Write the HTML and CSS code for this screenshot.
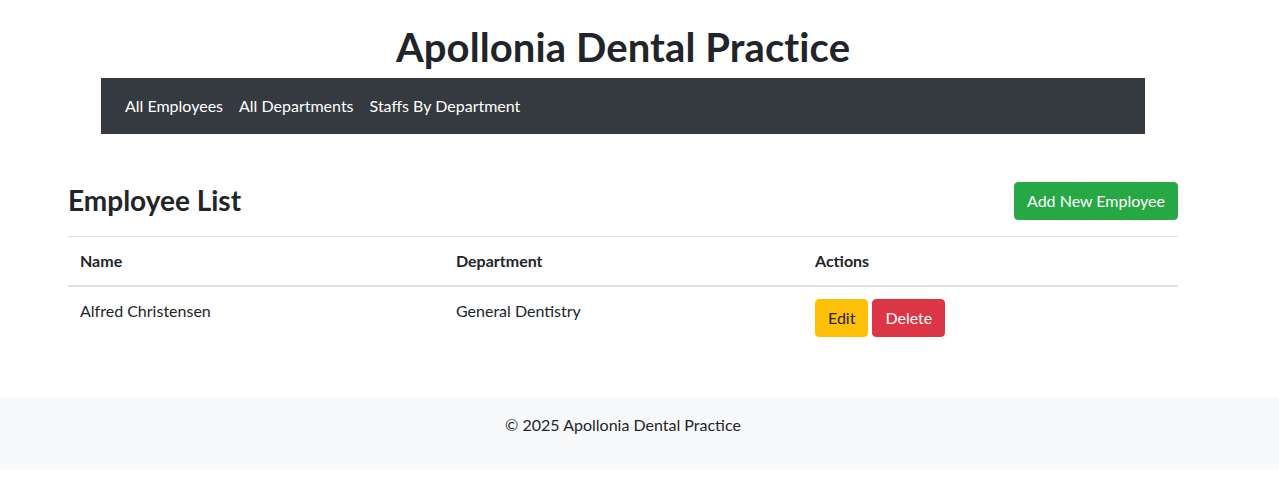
FILE: index.html
```html
<!DOCTYPE html>
<html lang="en">
<head>
<meta charset="utf-8">
<title>Apollonia Dental Practice</title>
<link rel="stylesheet" href="styles.css">
</head>
<body>
<div class="page">
  <header class="site-header">
    <h1 class="site-title">Apollonia Dental Practice</h1>
    <nav class="navbar">
      <a class="nav-link" href="#">All Employees</a>
      <a class="nav-link" href="#">All Departments</a>
      <a class="nav-link" href="#">Staffs By Department</a>
    </nav>
  </header>
  <main class="main">
    <div class="list-head">
      <h3 class="list-title">Employee List</h3>
      <a class="btn btn-success" href="#">Add New Employee</a>
    </div>
    <table class="table">
      <thead>
        <tr>
          <th class="col-name">Name</th>
          <th class="col-dept">Department</th>
          <th class="col-actions">Actions</th>
        </tr>
      </thead>
      <tbody>
        <tr>
          <td>Alfred Christensen</td>
          <td>General Dentistry</td>
          <td>
            <div class="actions">
              <a class="btn btn-warning" href="#">Edit</a>
              <button class="btn btn-danger" type="button">Delete</button>
            </div>
          </td>
        </tr>
      </tbody>
    </table>
  </main>
</div>
<footer class="footer">
  <div class="footer-inner">
    <p class="footer-text">© 2025 Apollonia Dental Practice</p>
  </div>
</footer>
</body>
</html>
```
FILE: styles.css
```css
* { box-sizing: border-box; }

body {
  margin: 0;
  font-family: "Lato", "Open Sans", sans-serif;
  font-size: 16px;
  line-height: 1.5;
  color: #212529;
  background: #fff;
}

.page {
  width: 1246px;
}

.site-header {
  padding-top: 23px;
}

.site-title {
  margin: 0 0 7px;
  text-align: center;
  font-size: 40px;
  font-weight: 700;
  line-height: 48px;
  letter-spacing: 0.1px;
}

.navbar {
  width: 1044px;
  margin: 0 auto;
  background: #343a40;
  padding: 8px 16px;
  display: flex;
}

.nav-link {
  display: block;
  padding: 8px;
  color: #fff;
  text-decoration: none;
  line-height: 24px;
}

.main {
  width: 1110px;
  margin: 48px auto 0;
  padding-bottom: 32px;
}

.list-head {
  display: flex;
  justify-content: space-between;
  align-items: center;
  margin-bottom: 16px;
}

.list-title {
  margin: 0;
  font-size: 28px;
  font-weight: 700;
  line-height: 1.2;
}

.btn {
  display: inline-block;
  padding: 6px 12px;
  font-family: inherit;
  font-size: 16px;
  line-height: 24px;
  border: 1px solid transparent;
  border-radius: 4px;
  text-decoration: none;
  cursor: pointer;
}

.btn-success { background: #28a745; border-color: #28a745; color: #fff; }
.btn-warning { background: #ffc107; border-color: #ffc107; color: #212529; }
.btn-danger { background: #dc3545; border-color: #dc3545; color: #fff; }

.table {
  width: 100%;
  border-collapse: collapse;
  margin-bottom: 16px;
}

.table th,
.table td {
  padding: 12px;
  text-align: left;
  vertical-align: top;
  border-top: 1px solid #dee2e6;
}

.table thead th {
  vertical-align: bottom;
  border-bottom: 2px solid #dee2e6;
  font-weight: 700;
}

.table tbody tr:first-child td { border-top: none; }

.col-name { width: 376px; }
.col-dept { width: 359px; }

.actions {
  display: flex;
  gap: 4px;
}

.footer {
  background: #f8f9fa;
  padding: 16px 0;
  margin-bottom: 20px;
}

.footer-inner {
  width: 1246px;
  text-align: center;
}

.footer-text {
  margin: 0 0 16px;
}
```
